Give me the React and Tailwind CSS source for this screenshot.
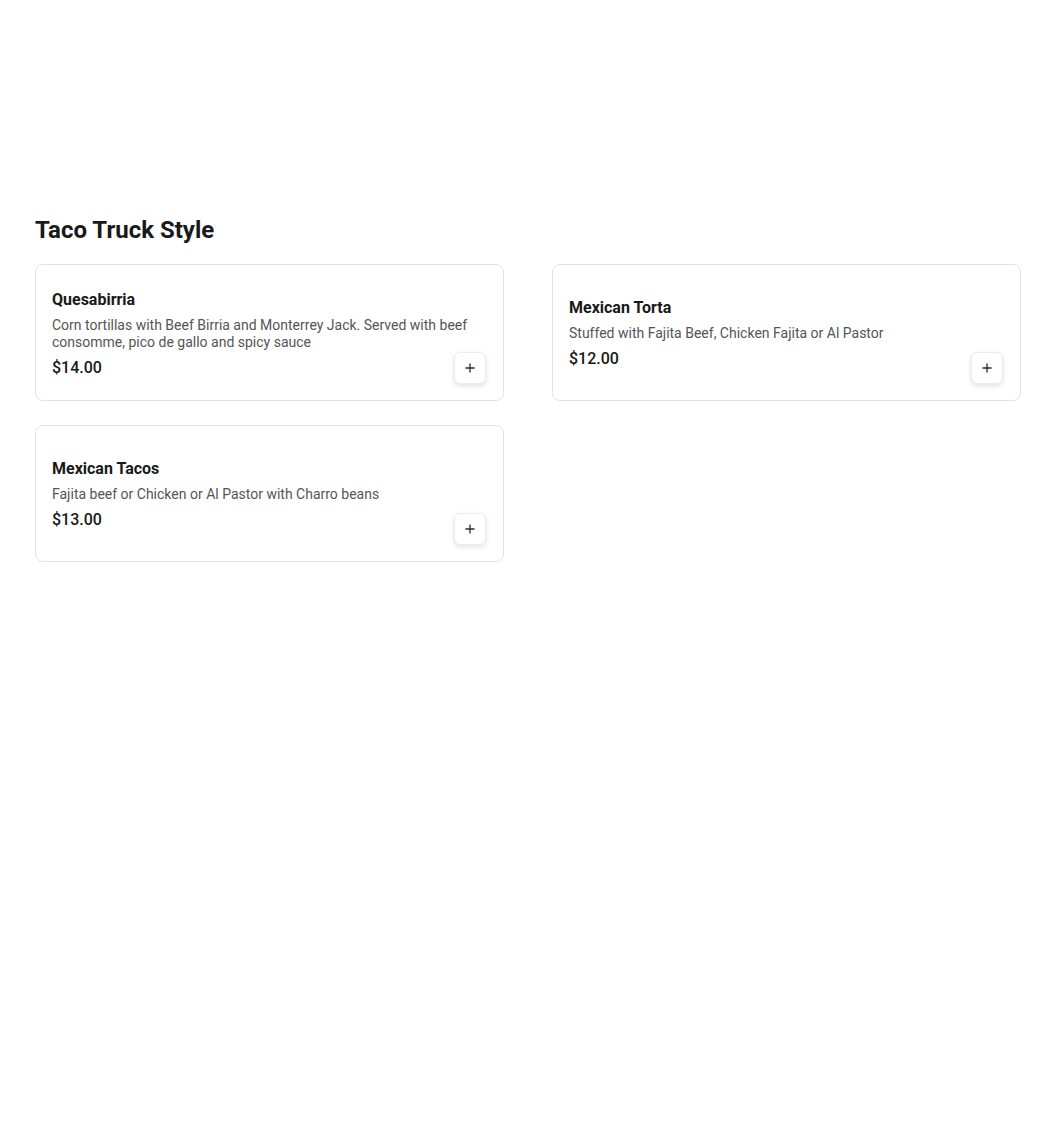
import React from 'react';
import { Plus } from 'lucide-react';

const items = [
    {
        name: 'Quesabirria',
        description: 'Corn tortillas with Beef Birria and Monterrey Jack. Served with beef consomme, pico de gallo and spicy sauce',
        price: '$14.00',
    },
    {
        name: 'Mexican Torta',
        description: 'Stuffed with Fajita Beef, Chicken Fajita or Al Pastor',
        price: '$12.00',
    },
    {
        name: 'Mexican Tacos',
        description: 'Fajita beef or Chicken or Al Pastor with Charro beans',
        price: '$13.00',
    },
];

const MenuCard = ({ item }) => (
    <div className="relative flex h-[137px] items-center rounded-lg border border-[#e3e3e3] bg-white px-4 pb-4 pt-[18px]">
        <div className="w-full">
            <h3 className="text-base font-bold leading-5 text-[#191919]">{item.name}</h3>
            <p className="mt-[7px] text-sm leading-[17px] text-[#555555]">{item.description}</p>
            <p className="mt-[7px] text-base font-medium leading-5 text-[#191919]">{item.price}</p>
        </div>
        {/* add-to-cart button sits over the card's bottom right corner */}
        <button
            type="button"
            className="absolute bottom-4 right-[17px] flex h-8 w-8 items-center justify-center rounded-md border border-[#ececec] bg-white text-[#2a2a2a] shadow-[0_2px_5px_rgba(0,0,0,0.12)]"
        >
            <Plus size={14} strokeWidth={2.25} />
        </button>
    </div>
);

const App = () => {
    return (
        <div className="min-h-screen bg-white pl-[35px] pr-[29px] pt-[214px] font-['Roboto',sans-serif] text-[#191919]">
            <h2 className="text-2xl font-bold leading-8">Taco Truck Style</h2>

            <div className="mt-[18px] grid grid-cols-2 gap-x-12 gap-y-6">
                {items.map((item) => (
                    <MenuCard key={item.name} item={item} />
                ))}
            </div>
        </div>
    );
};

export default App;
